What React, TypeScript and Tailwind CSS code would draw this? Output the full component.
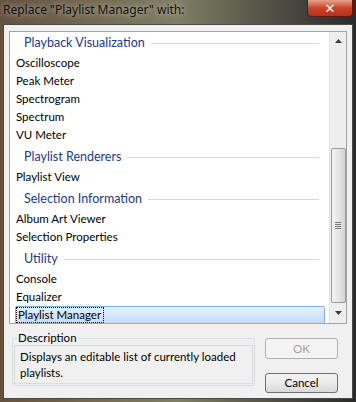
import React from "react";

type Group = { title: string; items: string[] };

const groups: Group[] = [
  { title: "Playback Visualization", items: ["Oscilloscope", "Peak Meter", "Spectrogram", "Spectrum", "VU Meter"] },
  { title: "Playlist Renderers", items: ["Playlist View"] },
  { title: "Selection Information", items: ["Album Art Viewer", "Selection Properties"] },
  { title: "Utility", items: ["Console", "Equalizer", "Playlist Manager"] },
];

const selected = "Playlist Manager";

const uiFont = { fontFamily: 'Lato, "Noto Sans", sans-serif' };

function GroupHeader({ title, first }: { title: string; first: boolean }) {
  return (
    <div className={`flex items-center pl-[14px] pr-[10px] ${first ? "h-[22px]" : "h-[24px] pt-[2px]"}`}>
      <span className="text-[12.5px] text-[#22398a] leading-none whitespace-nowrap">{title}</span>
      <div className="flex-1 h-px bg-[#d3d8e2] ml-[6px] mt-[1px]" />
    </div>
  );
}

function Item({ label }: { label: string }) {
  const isSel = label === selected;
  if (isSel) {
    return (
      <div className="h-[18px] ml-[5px] mr-[4px] flex items-stretch rounded-[2px] border border-[#84acdd] bg-gradient-to-b from-[#e6f0fc] to-[#c4dcfb]">
        <span className="text-[11.5px] leading-[14px] text-black pl-px pr-[2px] flex items-center border border-dotted border-black">{label}</span>
      </div>
    );
  }
  return (
    <div className="h-[18px] pl-[6px] flex items-center">
      <span className="text-[11.5px] leading-none text-black">{label}</span>
    </div>
  );
}

function Scrollbar() {
  return (
    <div className="w-[17px] bg-[#eeeeee] border-l border-[#e4e4e4] flex flex-col items-center">
      <div className="h-[17px] w-full flex items-center justify-center">
        <svg width="7" height="4" viewBox="0 0 7 4"><path d="M0 4 L3.5 0 L7 4 Z" fill="#3c3c3c" /></svg>
      </div>
      <div className="h-[99px]" />
      <div className="h-[155px] w-[15px] rounded-[2px] border border-[#9b9b9b] bg-gradient-to-r from-[#f2f2f2] via-[#e6e6e6] to-[#d4d4d4] flex items-center justify-center">
        <div className="flex flex-col gap-[1px]">
          <div className="w-[6px] h-px bg-[#7a7a7a]" />
          <div className="w-[6px] h-px bg-[#7a7a7a]" />
          <div className="w-[6px] h-px bg-[#7a7a7a]" />
          <div className="w-[6px] h-px bg-[#7a7a7a]" />
        </div>
      </div>
      <div className="flex-1 w-full flex items-center justify-center">
        <svg width="7" height="4" viewBox="0 0 7 4"><path d="M0 0 L3.5 4 L7 0 Z" fill="#3c3c3c" /></svg>
      </div>
    </div>
  );
}

export default function App() {
  return (
    <div
      className="w-[356px] h-[402px] relative overflow-hidden bg-gradient-to-r from-[#64523e] via-[#7f7f64] to-[#2a2a2a] flex flex-col"
      style={{ fontFamily: '"Noto Sans", sans-serif' }}
    >
      {/* title bar */}
      <div className="h-[24px] flex items-start pl-[3px] pt-[1px]">
        <span className="text-[12px] leading-[18px] text-[#111] [text-shadow:0_0_6px_rgba(255,255,255,0.7)]">
          Replace "Playlist Manager" with:
        </span>
      </div>
      <div className="absolute right-[3px] top-0 w-[46px] h-[17px] rounded-b-[4px] border border-t-0 border-[#5a1a10] bg-gradient-to-b from-[#e8a08a] via-[#c8432a] to-[#b9301c] flex items-center justify-center">
        <span className="text-white text-[13px] font-bold leading-none" style={{ fontFamily: '"DejaVu Sans", sans-serif' }}>✕</span>
      </div>

      {/* dialog panel */}
      <div className="mx-[3px] mb-[3px] flex-1 bg-[#f0f0f0] border border-[#4a4a4a] flex flex-col px-[5px] pt-[6px]" style={uiFont}>
        <div className="h-[293px] border border-[#a3a3a3] bg-white flex">
          <div className="flex-1 flex flex-col">
            {groups.map((g, gi) => (
              <div key={g.title}>
                <GroupHeader title={g.title} first={gi === 0} />
                {g.items.map((it) => (
                  <Item key={it} label={it} />
                ))}
              </div>
            ))}
          </div>
          <Scrollbar />
        </div>

        <div className="flex mt-[14px] gap-[14px]">
          <div className="w-[243px] ml-[3px] h-[48px] relative border border-[#d5dfe5] rounded-[3px] pt-[6px] px-px pb-px">
            <span className="absolute left-[4px] -top-[8px] px-[1px] bg-[#f0f0f0] text-[11.5px] leading-[14px] text-black">Description</span>
            <div className="h-full border border-[#dcdcdc] px-[5px] pt-[3px] text-[11.5px] leading-[16px] text-black">
              Displays an editable list of currently loaded playlists.
            </div>
          </div>
          <div className="flex flex-col gap-[14px] -ml-[4px]">
            <div className="w-[73px] h-[21px] rounded-[3px] border border-[#adb2b5] bg-[#f4f4f4] flex items-center justify-center text-[11.5px] text-[#a0a0a0]">
              OK
            </div>
            <div className="w-[73px] h-[20px] rounded-[3px] border border-[#707070] bg-gradient-to-b from-[#f3f3f3] via-[#ebebeb] to-[#d8d8d8] flex items-center justify-center text-[11.5px] text-black">
              Cancel
            </div>
          </div>
        </div>
      </div>
    </div>
  );
}
